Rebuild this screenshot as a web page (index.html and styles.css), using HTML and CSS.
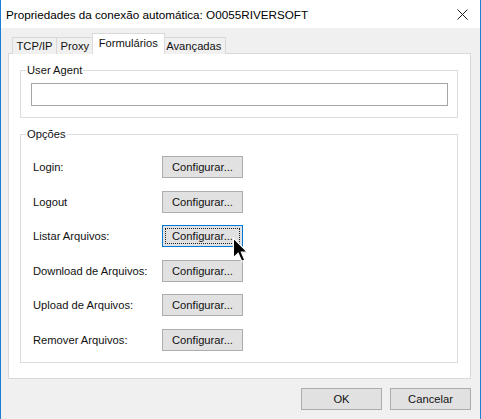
FILE: index.html
```html
<!DOCTYPE html>
<html lang="pt">
<head>
<meta charset="utf-8">
<title>Propriedades</title>
<link rel="stylesheet" href="styles.css">
</head>
<body>
<div class="window">
  <div class="titlebar">
    <span class="title">Propriedades da conexão automática: O0055RIVERSOFT</span>
    <svg class="close" width="11" height="11" viewBox="0 0 11 11"><path d="M0.5 0.5 L10.5 10.5 M10.5 0.5 L0.5 10.5" stroke="#222" stroke-width="1" fill="none"/></svg>
  </div>
  <div class="body">
    <div class="tabs">
      <div class="tab">TCP/IP</div>
      <div class="tab">Proxy</div>
      <div class="tab active">Formulários</div>
      <div class="tab">Avançadas</div>
    </div>
    <div class="panel">
      <fieldset class="group ua">
        <legend>User Agent</legend>
        <div class="input"></div>
      </fieldset>
      <fieldset class="group opts">
        <legend>Opções</legend>
        <div class="row"><span class="label">Login:</span><button class="btn">Configurar...</button></div>
        <div class="row"><span class="label">Logout</span><button class="btn">Configurar...</button></div>
        <div class="row"><span class="label">Listar Arquivos:</span><button class="btn focus">Configurar...</button></div>
        <div class="row"><span class="label">Download de Arquivos:</span><button class="btn">Configurar...</button></div>
        <div class="row"><span class="label">Upload de Arquivos:</span><button class="btn">Configurar...</button></div>
        <div class="row"><span class="label">Remover Arquivos:</span><button class="btn">Configurar...</button></div>
      </fieldset>
    </div>
    <div class="actions">
      <button class="btn">OK</button>
      <button class="btn">Cancelar</button>
    </div>
  </div>
  <svg class="cursor" width="17" height="26" viewBox="0 0 14 22"><path d="M1 1 L1 17.5 L5 13.8 L8 20.5 L10.6 19.4 L7.7 12.8 L12.8 12.8 Z" fill="#000" stroke="#fff" stroke-width="1" stroke-linejoin="miter"/></svg>
</div>
</body>
</html>
```
FILE: styles.css
```css
body {
  margin: 0;
}
.window {
  position: relative;
  width: 481px;
  height: 419px;
  box-sizing: border-box;
  border-left: 1px solid #1b7fd6;
  border-right: 1px solid #1b7fd6;
  background: #f0f0f0;
  font-family: "Liberation Sans", Arial, sans-serif;
  font-size: 11.2px;
  color: #111;
  display: flex;
  flex-direction: column;
}
.titlebar {
  height: 28px;
  flex: none;
  background: #fff;
  display: flex;
  align-items: center;
  justify-content: space-between;
  padding-left: 5px;
}
.title {
  font-size: 11.7px;
  color: #000;
}
.close {
  margin-right: 12px;
}
.body {
  flex: 1;
  display: flex;
  flex-direction: column;
  padding: 6px 9px 0 7px;
}
.tabs {
  display: flex;
  align-items: flex-end;
  height: 20px;
  padding-left: 5px;
  margin-bottom: -1px;
  position: relative;
  z-index: 1;
}
.tab {
  height: 16px;
  line-height: 16px;
  padding: 0 3.5px;
  border: 1px solid #d9d9d9;
  border-bottom: none;
  background: #f0f0f0;
  margin-left: -1px;
}
.tab.active {
  height: 20px;
  line-height: 18px;
  background: #fff;
  margin: 0 -2px 0 -2px;
  padding: 0 6px;
  position: relative;
  z-index: 2;
}
.panel {
  height: 326px;
  box-sizing: border-box;
  border: 1px solid #d9d9d9;
  background: #fff;
  padding: 8px 12px 0 11px;
}
.group {
  margin: 0;
  border: 1px solid #dcdcdc;
  min-width: 0;
}
.group legend {
  padding: 0 1px;
  line-height: 16px;
}
.ua {
  padding: 5px 9px 11px 10px;
}
.ua legend {
  margin-left: -5px;
}
.input {
  height: 23px;
  box-sizing: border-box;
  border: 1px solid #a6a6a6;
  background: #fff;
}
.opts {
  margin-top: 8px;
  padding: 14px 9px 11px 12px;
  display: flex;
  flex-direction: column;
  gap: 12.5px;
}
.opts legend {
  margin-left: -7px;
}
.row {
  display: flex;
  align-items: center;
  height: 22px;
}
.label {
  width: 129px;
  flex: none;
}
.btn {
  width: 81px;
  height: 22px;
  box-sizing: border-box;
  padding: 0;
  background: #e1e1e1;
  border: 1px solid #adadad;
  font-family: inherit;
  font-size: 11.2px;
  color: #111;
}
.btn.focus {
  border-color: #0078d7;
  outline: 1px dotted #222;
  outline-offset: -4px;
}
.actions {
  display: flex;
  justify-content: flex-end;
  gap: 8px;
  margin-top: 9px;
}
.cursor {
  position: absolute;
  left: 231px;
  top: 237px;
}
```
